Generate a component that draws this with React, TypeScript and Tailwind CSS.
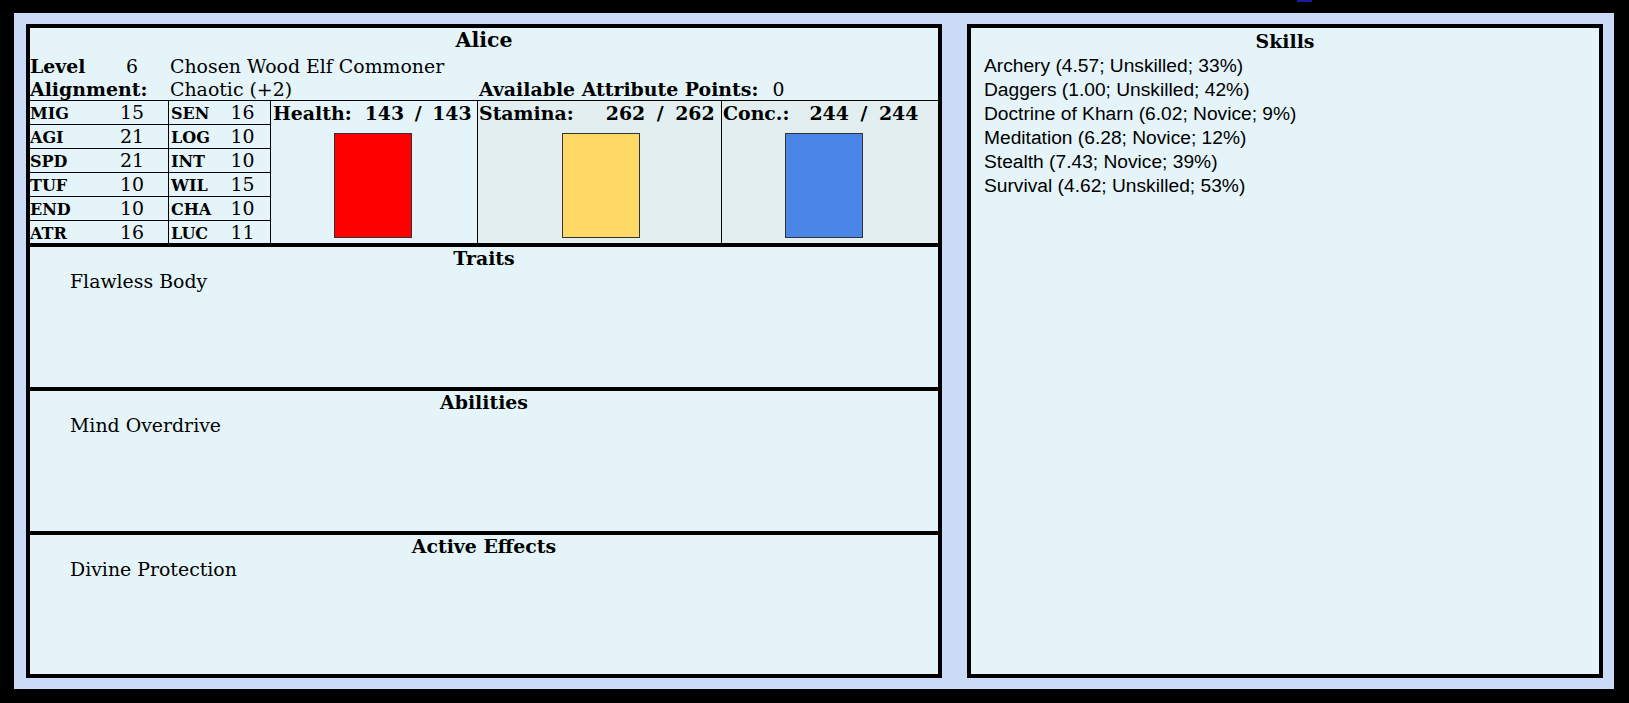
import React from "react";

const stats: [string, string, string, string][] = [
  ["MIG", "15", "SEN", "16"],
  ["AGI", "21", "LOG", "10"],
  ["SPD", "21", "INT", "10"],
  ["TUF", "10", "WIL", "15"],
  ["END", "10", "CHA", "10"],
  ["ATR", "16", "LUC", "11"],
];

const skills = [
  "Archery (4.57; Unskilled; 33%)",
  "Daggers (1.00; Unskilled; 42%)",
  "Doctrine of Kharn (6.02; Novice; 9%)",
  "Meditation (6.28; Novice; 12%)",
  "Stealth (7.43; Novice; 39%)",
  "Survival (4.62; Unskilled; 53%)",
];

function StatRow({ row, i }: { row: [string, string, string, string]; i: number }) {
  const cls =
    i === 0
      ? "h-[23px] flex items-baseline leading-[23px]"
      : i === 5
      ? "h-[23px] flex items-baseline leading-[22px] border-t border-black"
      : "h-[24px] flex items-baseline leading-[23px] border-t border-black";
  return (
    <div className={cls}>
      <div className="w-[66px] text-[16px] font-bold">{row[0]}</div>
      <div className="w-[73px] text-center border-r border-black self-stretch">{row[1]}</div>
      <div className="w-[46px] pl-[2px] text-[16px] font-bold">{row[2]}</div>
      <div className="flex-1 text-center">{row[3]}</div>
    </div>
  );
}

function Section({ title, item, last }: { title: string; item: string; last?: boolean }) {
  return (
    <div className={last ? "flex-1 border-t-4 border-black" : "h-[144px] border-t-4 border-black"}>
      <div className="leading-[22px] text-center font-bold">{title}</div>
      <div className="leading-[24px] pl-[40px]">{item}</div>
    </div>
  );
}

export default function App() {
  return (
    <div className="relative w-[1629px] h-[703px] bg-black pt-[13px] pl-[14px] font-['DejaVu_Serif',serif] text-[18.9px] text-black">
      <div className="absolute left-[1297px] top-0 w-[15px] h-[2px] bg-[#1a1a9a]" />
      <div className="w-[1600px] h-[676px] bg-[#c9dbf6] flex pt-[11px] pl-[12px] gap-[25px]">
        <div className="w-[916px] h-[654px] border-4 border-black bg-[#e4f4f8] flex flex-col">
          <div className="h-[215px] flex flex-col">
            <div className="h-[26px] leading-[25px] text-center font-bold text-[20.5px]">Alice</div>
            <div className="h-[24px] leading-[24px] flex">
              <div className="w-[66px] font-bold">Level</div>
              <div className="w-[72px] text-center">6</div>
              <div className="pl-[2px]">Chosen Wood Elf Commoner</div>
            </div>
            <div className="h-[22px] leading-[23px] flex">
              <div className="w-[138px] font-bold">Alignment:</div>
              <div className="w-[310px] pl-[2px]">Chaotic (+2)</div>
              <div className="pl-[1px] whitespace-pre">
                <span className="font-bold">Available Attribute Points:</span>
                <span className="ml-[14px]">0</span>
              </div>
            </div>
            <div className="flex border-t border-black h-[143px]">
              <div className="w-[241px] flex flex-col border-r border-black">
                {stats.map((r, i) => (
                  <StatRow key={r[0]} row={r} i={i} />
                ))}
              </div>
              <div className="w-[207px] border-r border-black flex flex-col">
                <div className="h-[24px] leading-[24px] pl-[2px] font-bold whitespace-pre flex">
                  <span>Health:</span>
                  <span className="ml-[13px] [word-spacing:4px]">143 / 143</span>
                </div>
                <div className="mt-[8px] ml-[63px] w-[78px] h-[105px] bg-[#ff0000] border border-[#333]" />
              </div>
              <div className="w-[244px] border-r border-black flex flex-col bg-[#e2eef0]">
                <div className="h-[24px] leading-[24px] pl-[1px] font-bold whitespace-pre flex">
                  <span>Stamina:</span>
                  <span className="ml-[32px] [word-spacing:5px]">262 / 262</span>
                </div>
                <div className="mt-[8px] ml-[84px] w-[78px] h-[105px] bg-[#ffd966] border border-[#333]" />
              </div>
              <div className="flex-1 flex flex-col bg-[#e2eef0]">
                <div className="h-[24px] leading-[24px] pl-[1px] font-bold whitespace-pre flex">
                  <span>Conc.:</span>
                  <span className="ml-[20px] [word-spacing:5px]">244 / 244</span>
                </div>
                <div className="mt-[8px] ml-[63px] w-[78px] h-[105px] bg-[#4a86e8] border border-[#333]" />
              </div>
            </div>
          </div>
          <Section title="Traits" item="Flawless Body" />
          <Section title="Abilities" item="Mind Overdrive" />
          <Section title="Active Effects" item="Divine Protection" last />
        </div>
        <div className="w-[636px] h-[654px] border-4 border-black bg-[#e4f4f8] flex flex-col">
          <div className="h-[26px] leading-[26px] text-center font-bold">Skills</div>
          <div className="pl-[13px] text-[19.2px] font-['Liberation_Sans',Arial,sans-serif]">
            {skills.map((s) => (
              <div key={s} className="leading-[24px]">
                {s}
              </div>
            ))}
          </div>
        </div>
      </div>
    </div>
  );
}
